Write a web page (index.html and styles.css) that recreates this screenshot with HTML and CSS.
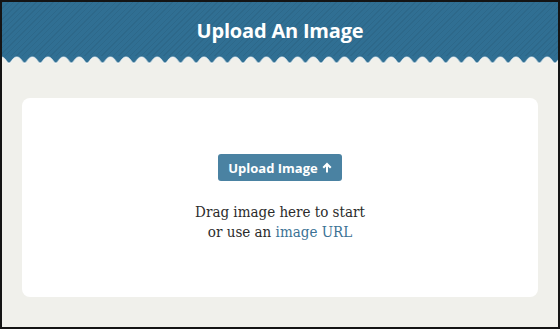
FILE: index.html
```html
<!DOCTYPE html>
<html>
<head>
<meta name="viewport" content="width=device-width, initial-scale=1">
<link rel="stylesheet" href="styles.css">
</head>
<body>
  <div class="frame">
    <div class="header">
      <h1 class="title">Upload An Image</h1>
    </div>
    <svg class="wave" width="100%" height="8">
      <defs>
        <pattern id="scallop" x="7" y="0" width="15.6" height="8" patternUnits="userSpaceOnUse">
          <rect x="0" y="0" width="15.6" height="8" fill="#306f93"></rect>
          <path d="M0 7 C2.6 7 3.4 1 7.8 1 C12.2 1 13 7 15.6 7 L15.6 9 L0 9 Z" fill="#f0f0eb" stroke="#ffffff" stroke-width="0.8"></path>
        </pattern>
      </defs>
      <rect x="0" y="0" width="100%" height="8" fill="url(#scallop)"></rect>
    </svg>

    <div class="main">
      <div class="card">
        <button class="upload-btn">Upload Image
          <svg class="arrow" width="10" height="11" viewBox="0 0 10 11">
            <path d="M5 0.5 L9.5 5 L8 6.4 L6 4.4 L6 10.5 L4 10.5 L4 4.4 L2 6.4 L0.5 5 Z" fill="#ffffff"></path>
          </svg>
        </button>
        <p class="hint">Drag image here to start<br>or use an <a href="#" class="link">image URL</a></p>
      </div>
    </div>
  </div>
</body>
</html>
```

FILE: styles.css
```css
body {
    margin: 0;
    font-family: "Open Sans", Arial, sans-serif;
}

.frame {
    width: 560px;
    height: 329px;
    box-sizing: border-box;
    border: 2px solid #141414;
    background-color: #f0f0eb;
    display: flex;
    flex-direction: column;
}

.header {
    height: 54px;
    background-color: #306f93;
    background-image: repeating-linear-gradient(135deg, rgba(0,0,0,0.06) 0 1px, transparent 1px 4px);
    display: flex;
    align-items: center;
    justify-content: center;
    padding-top: 2px;
    box-sizing: border-box;
}

.title {
    margin: 0;
    color: #ffffff;
    font-size: 20px;
    font-weight: 700;
    letter-spacing: -0.2px;
}

.wave {
    display: block;
}

.main {
    flex: 1;
    padding: 34px 20px 30px 20px;
    display: flex;
}

.card {
    flex: 1;
    background-color: #ffffff;
    border-radius: 8px;
    display: flex;
    flex-direction: column;
    align-items: center;
    padding-top: 56px;
}

.upload-btn {
    background-color: #4a82a2;
    color: #ffffff;
    border: none;
    border-radius: 3px;
    height: 27px;
    padding: 0 10px;
    font-family: "Open Sans", Arial, sans-serif;
    font-size: 13px;
    font-weight: 700;
    display: flex;
    align-items: center;
    gap: 4px;
}

.hint {
    margin: 21px 0 0 0;
    text-align: center;
    font-family: "DejaVu Serif Condensed", "DejaVu Serif", "Liberation Serif", serif;
    font-stretch: condensed;
    font-size: 15px;
    line-height: 20px;
    color: #2b2b2b;
}

.link {
    color: #3b7295;
    text-decoration: none;
}
```
